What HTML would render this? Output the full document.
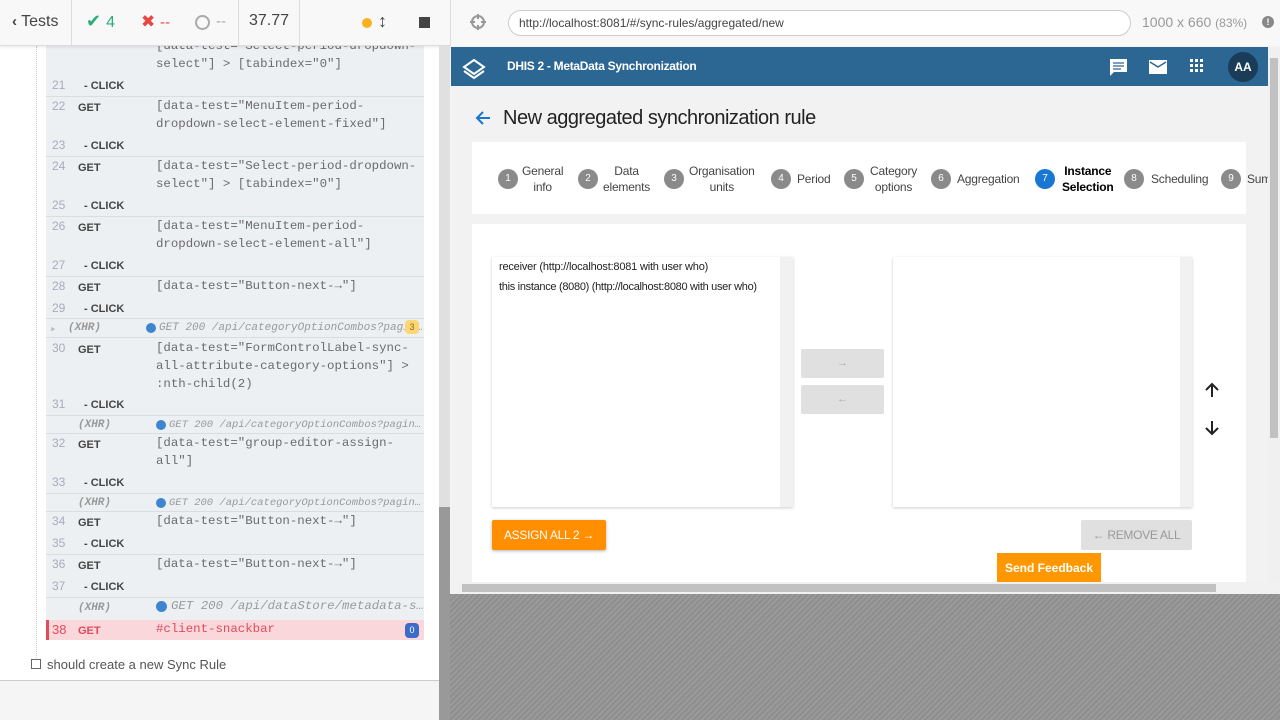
<!DOCTYPE html>
<html><head><meta charset="utf-8"><style>
*{box-sizing:border-box;margin:0;padding:0}
body{width:1280px;height:720px;overflow:hidden;position:relative;background:#f5f5f5;font-family:"Liberation Sans",sans-serif}
.a{position:absolute;white-space:nowrap}
.m{font-family:"Liberation Mono",monospace;font-size:12.4px;color:#6b6b6b}
.n{font-family:"Liberation Sans",sans-serif;font-size:12px;color:#aab}
.g{font-family:"Liberation Sans",sans-serif;font-size:11px;font-weight:bold;color:#444}
.x{font-family:"Liberation Mono",monospace;font-size:11px;font-style:italic;color:#999}
.hr{position:absolute;left:46px;width:378px;height:1px;background:#d8dde2}
.st{position:absolute;top:169px;width:20px;height:20px;border-radius:50%;background:#8a8a8a;color:#fff;font-size:10px;text-align:center;line-height:20px}
.sl{position:absolute;font-size:12px;color:#444;text-align:center;line-height:16px;letter-spacing:-0.2px}
</style></head><body>
<div class="a" style="left:0;top:0;width:439px;height:681px;background:#fff;border-bottom:1px solid #ccc"></div>
<div class="a" style="left:46px;top:46px;width:378px;height:594px;background:#edf0f3"></div>
<div class="a" style="left:36px;top:46px;width:0;height:612px;border-left:1px dotted #ccc"></div>
<div class="a" style="left:46px;top:620px;width:378px;height:20px;background:#f9d7db;border-left:3px solid #e04b5a"></div>
<div class="hr" style="top:96px"></div><div class="hr" style="top:156px"></div><div class="hr" style="top:216px"></div><div class="hr" style="top:276px"></div><div class="hr" style="top:318px"></div><div class="hr" style="top:337px"></div><div class="hr" style="top:415px"></div><div class="hr" style="top:433px"></div><div class="hr" style="top:493px"></div><div class="hr" style="top:511px"></div><div class="hr" style="top:554px"></div><div class="hr" style="top:597px"></div>
<div class="a m" style="left:156px;top:39px">[data-test="Select-period-dropdown-</div>
<div class="a m" style="left:156px;top:57px">select"] &gt; [tabindex="0"]</div>
<div class="a n" style="left:52px;top:78px">21</div><div class="a g" style="left:84px;top:80px">- CLICK</div>
<div class="a n" style="left:52px;top:99px">22</div><div class="a g" style="left:78px;top:102px">GET</div><div class="a m" style="left:156px;top:99px">[data-test="MenuItem-period-</div><div class="a m" style="left:156px;top:117px">dropdown-select-element-fixed"]</div>
<div class="a n" style="left:52px;top:138px">23</div><div class="a g" style="left:84px;top:140px">- CLICK</div>
<div class="a n" style="left:52px;top:159px">24</div><div class="a g" style="left:78px;top:162px">GET</div><div class="a m" style="left:156px;top:159px">[data-test="Select-period-dropdown-</div><div class="a m" style="left:156px;top:177px">select"] &gt; [tabindex="0"]</div>
<div class="a n" style="left:52px;top:198px">25</div><div class="a g" style="left:84px;top:200px">- CLICK</div>
<div class="a n" style="left:52px;top:219px">26</div><div class="a g" style="left:78px;top:222px">GET</div><div class="a m" style="left:156px;top:219px">[data-test="MenuItem-period-</div><div class="a m" style="left:156px;top:237px">dropdown-select-element-all"]</div>
<div class="a n" style="left:52px;top:258px">27</div><div class="a g" style="left:84px;top:260px">- CLICK</div>
<div class="a n" style="left:52px;top:279px">28</div><div class="a g" style="left:78px;top:282px">GET</div><div class="a m" style="left:156px;top:279px">[data-test="Button-next-→"]</div>
<div class="a n" style="left:52px;top:301px">29</div><div class="a g" style="left:84px;top:303px">- CLICK</div>
<div class="a x" style="left:50px;top:322px;color:#bbb">▸</div><div class="a x" style="left:68px;top:322px;font-weight:bold">(XHR)</div><div class="a" style="left:146px;top:323px;width:10px;height:10px;border-radius:50%;background:#3d86cf"></div><div class="a x" style="left:159px;top:322px">GET 200 /api/categoryOptionCombos?pagin…</div><div class="a" style="left:405px;top:320px;width:14px;height:14px;border-radius:4px;background:#fcd672;color:#8a6d1a;font-size:9px;text-align:center;line-height:14px">3</div>
<div class="a n" style="left:52px;top:341px">30</div><div class="a g" style="left:78px;top:344px">GET</div><div class="a m" style="left:156px;top:341px">[data-test="FormControlLabel-sync-</div><div class="a m" style="left:156px;top:359px">all-attribute-category-options"] &gt;</div><div class="a m" style="left:156px;top:377px">:nth-child(2)</div>
<div class="a n" style="left:52px;top:397px">31</div><div class="a g" style="left:84px;top:399px">- CLICK</div>
<div class="a x" style="left:78px;top:419px;font-weight:bold">(XHR)</div><div class="a" style="left:156px;top:420px;width:10px;height:10px;border-radius:50%;background:#3d86cf"></div><div class="a x" style="left:169px;top:419px;font-size:10.5px">GET 200 /api/categoryOptionCombos?pagin…</div>
<div class="a n" style="left:52px;top:436px">32</div><div class="a g" style="left:78px;top:439px">GET</div><div class="a m" style="left:156px;top:436px">[data-test="group-editor-assign-</div><div class="a m" style="left:156px;top:454px">all"]</div>
<div class="a n" style="left:52px;top:475px">33</div><div class="a g" style="left:84px;top:477px">- CLICK</div>
<div class="a x" style="left:78px;top:497px;font-weight:bold">(XHR)</div><div class="a" style="left:156px;top:498px;width:10px;height:10px;border-radius:50%;background:#3d86cf"></div><div class="a x" style="left:169px;top:497px;font-size:10.5px">GET 200 /api/categoryOptionCombos?pagin…</div>
<div class="a n" style="left:52px;top:514px">34</div><div class="a g" style="left:78px;top:517px">GET</div><div class="a m" style="left:156px;top:514px">[data-test="Button-next-→"]</div>
<div class="a n" style="left:52px;top:536px">35</div><div class="a g" style="left:84px;top:538px">- CLICK</div>
<div class="a n" style="left:52px;top:557px">36</div><div class="a g" style="left:78px;top:560px">GET</div><div class="a m" style="left:156px;top:557px">[data-test="Button-next-→"]</div>
<div class="a n" style="left:52px;top:579px">37</div><div class="a g" style="left:84px;top:581px">- CLICK</div>
<div class="a x" style="left:78px;top:602px;font-weight:bold">(XHR)</div><div class="a" style="left:156px;top:601px;width:11px;height:11px;border-radius:50%;background:#3d86cf"></div><div class="a x" style="left:171px;top:599px;font-size:12.4px">GET 200 /api/dataStore/metadata-s…</div>
<div class="a n" style="left:52px;top:622px;color:#e04b5a;font-size:13px">38</div><div class="a g" style="left:78px;top:625px;color:#e04b5a">GET</div><div class="a m" style="left:156px;top:622px;color:#e04b5a">#client-snackbar</div><div class="a" style="left:405px;top:623px;width:14px;height:15px;border-radius:4px;background:#3d6bc9;color:#fff;font-size:9px;text-align:center;line-height:15px">0</div>
<div class="a" style="left:31px;top:659px;width:10px;height:10px;border:1px solid #666"></div>
<div class="a" style="left:47px;top:657px;font-size:13px;color:#555">should create a new Sync Rule</div>
<div class="a" style="left:0;top:0;width:450px;height:46px;background:#f8f8f8;border-bottom:1px solid #ddd;box-shadow:0 1px 3px rgba(0,0,0,.1)"></div>
<div class="a" style="left:71px;top:0;width:1px;height:46px;background:#ddd"></div>
<div class="a" style="left:238px;top:0;width:1px;height:46px;background:#ddd"></div>
<div class="a" style="left:299px;top:0;width:1px;height:46px;background:#ddd"></div>
<div class="a" style="left:12px;top:13px;font-size:16px;color:#444"><b style="font-size:15px">‹</b> Tests</div>
<div class="a" style="left:86px;top:11px;font-size:18px;color:#2bad77">✔ <span style="font-size:16px">4</span></div>
<div class="a" style="left:141px;top:12px;font-size:17px;color:#e94444">✖ <span style="font-size:15px">--</span></div>
<div class="a" style="left:195px;top:15px;width:15px;height:15px;border:2px solid #aaa;border-radius:50%"></div><div class="a" style="left:216px;top:13px;font-size:15px;color:#aaa">--</div>
<div class="a" style="left:249px;top:12px;font-size:16px;color:#444">37.77</div>
<div class="a" style="left:362px;top:18px;width:10px;height:10px;border-radius:50%;background:#fbb11e"></div>
<div class="a" style="left:378px;top:11px;font-size:18px;color:#444;font-weight:bold">↕</div>
<div class="a" style="left:419px;top:17px;width:11px;height:11px;background:#444"></div>
<div class="a" style="left:439px;top:46px;width:11px;height:461px;background:#e0e0e0"></div>
<div class="a" style="left:439px;top:507px;width:11px;height:213px;background:#999"></div>
<div class="a" style="left:450px;top:0;width:830px;height:46px;background:#f8f8f8;border-left:1px solid #ddd"></div>
<svg class="a" style="left:469px;top:13px" width="18" height="18" viewBox="0 0 18 18"><circle cx="9" cy="9" r="6" fill="none" stroke="#999" stroke-width="2"/><path d="M9 1v5M9 12v5M1 9h5M12 9h5" stroke="#999" stroke-width="2"/></svg>
<div class="a" style="left:508px;top:10px;width:623px;height:26px;border:1px solid #ccc;border-radius:13px;background:#fff;font-size:12px;color:#444;padding:5px 10px">http://localhost:8081/#/sync-rules/aggregated/new</div>
<div class="a" style="left:1142px;top:14px;font-size:14px;color:#999">1000 x 660 <span style="font-size:12px">(83%)</span></div>
<div class="a" style="left:1262px;top:16px;width:12px;height:12px;border-radius:50%;background:#888;color:#fff;font-size:9px;text-align:center;line-height:12px;font-weight:bold">!</div>
<div class="a" style="left:450px;top:594px;width:830px;height:126px;background:repeating-linear-gradient(135deg,#8e8e8e 0 2px,#9a9a9a 2px 4px)"></div>
<div class="a" style="left:451px;top:47px;width:829px;height:547px;background:#f2f2f2"></div>
<div class="a" style="left:451px;top:47px;width:817px;height:39px;background:#2c6693"></div>
<svg class="a" style="left:462px;top:58px" width="24" height="22" viewBox="0 0 24 22"><path d="M12 2L22 9L12 16L2 9Z M2 13L12 20L22 13" fill="none" stroke="#fff" stroke-width="2"/></svg>
<div class="a" style="left:507px;top:59px;font-size:12px;color:#fff;font-weight:bold;letter-spacing:-0.3px">DHIS 2 - MetaData Synchronization</div>
<svg class="a" style="left:1109px;top:58px" width="19" height="19" viewBox="0 0 19 19"><path d="M1 1h17v13H5l-4 4z" fill="#fff"/><path d="M4 5h11M4 8h11M4 11h8" stroke="#2c6693" stroke-width="1.3"/></svg>
<svg class="a" style="left:1149px;top:60px" width="18" height="14" viewBox="0 0 18 14"><rect width="18" height="14" fill="#fff"/><path d="M1 2l8 5 8-5" fill="none" stroke="#2c6693" stroke-width="1.5"/></svg>
<svg class="a" style="left:1190px;top:59px" width="14" height="14"><g fill="#fff"><rect x="0" y="0" width="3" height="3"/><rect x="5" y="0" width="3" height="3"/><rect x="10" y="0" width="3" height="3"/><rect x="0" y="5" width="3" height="3"/><rect x="5" y="5" width="3" height="3"/><rect x="10" y="5" width="3" height="3"/><rect x="0" y="10" width="3" height="3"/><rect x="5" y="10" width="3" height="3"/><rect x="10" y="10" width="3" height="3"/></g></svg>
<div class="a" style="left:1228px;top:52px;width:30px;height:30px;border-radius:50%;background:#1b3c58;color:#fff;font-size:12px;font-weight:bold;text-align:center;line-height:30px">AA</div>
<div class="a" style="left:1268px;top:47px;width:12px;height:535px;background:#f0f0f0"></div>
<div class="a" style="left:1270px;top:58px;width:8px;height:380px;background:#c1c1c1"></div>
<svg class="a" style="left:475px;top:110px" width="16" height="16" viewBox="0 0 16 16"><path d="M15 8H2M8 2L2 8l6 6" fill="none" stroke="#1976d2" stroke-width="2"/></svg>
<div class="a" style="left:503px;top:107px;font-size:20px;color:#222;letter-spacing:-0.5px">New aggregated synchronization rule</div>
<div class="a" style="left:472px;top:142px;width:774px;height:72px;background:#fff"></div>
<div class="st" style="left:498px">1</div><div class="sl" style="left:522px;top:163px">General<br>info</div>
<div class="st" style="left:578px">2</div><div class="sl" style="left:603px;top:163px">Data<br>elements</div>
<div class="st" style="left:664px">3</div><div class="sl" style="left:689px;top:163px">Organisation<br>units</div>
<div class="st" style="left:771px">4</div><div class="sl" style="left:797px;top:171px">Period</div>
<div class="st" style="left:844px">5</div><div class="sl" style="left:870px;top:163px">Category<br>options</div>
<div class="st" style="left:931px">6</div><div class="sl" style="left:957px;top:171px">Aggregation</div>
<div class="st" style="left:1035px;background:#1976d2">7</div><div class="sl" style="left:1062px;top:163px;color:#000;font-weight:bold">Instance<br>Selection</div>
<div class="st" style="left:1124px">8</div><div class="sl" style="left:1151px;top:171px">Scheduling</div>
<div class="st" style="left:1221px">9</div><div class="sl" style="left:1247px;top:171px;width:21px;overflow:hidden;text-align:left">Sum</div>
<div class="a" style="left:472px;top:224px;width:774px;height:358px;background:#fff"></div>
<div class="a" style="left:492px;top:257px;width:301px;height:250px;background:#fff;box-shadow:0 1px 3px rgba(0,0,0,.2)"></div>
<div class="a" style="left:780px;top:257px;width:13px;height:250px;background:#f1f1f1"></div>
<div class="a" style="left:499px;top:261px;font-size:11px;color:#222;letter-spacing:-0.2px">receiver (http://localhost:8081 with user who)</div>
<div class="a" style="left:499px;top:281px;font-size:11px;color:#222;letter-spacing:-0.3px">this instance (8080) (http://localhost:8080 with user who)</div>
<div class="a" style="left:893px;top:257px;width:299px;height:250px;background:#fff;box-shadow:0 1px 3px rgba(0,0,0,.2)"></div>
<div class="a" style="left:1180px;top:257px;width:12px;height:250px;background:#f1f1f1"></div>
<div class="a" style="left:801px;top:349px;width:83px;height:29px;background:#e0e0e0;border-radius:2px;color:#aaa;font-size:11px;text-align:center;line-height:29px">→</div>
<div class="a" style="left:801px;top:385px;width:83px;height:29px;background:#e0e0e0;border-radius:2px;color:#aaa;font-size:11px;text-align:center;line-height:29px">←</div>
<svg class="a" style="left:1204px;top:382px" width="16" height="16" viewBox="0 0 16 16"><path d="M8 15V2M2 8l6-6 6 6" fill="none" stroke="#222" stroke-width="2"/></svg>
<svg class="a" style="left:1204px;top:420px" width="16" height="16" viewBox="0 0 16 16"><path d="M8 1v13M2 8l6 6 6-6" fill="none" stroke="#222" stroke-width="2"/></svg>
<div class="a" style="left:492px;top:520px;width:114px;height:30px;background:#ff8f00;border-radius:2px;color:#fff;font-size:12px;text-align:center;line-height:30px;box-shadow:0 1px 3px rgba(0,0,0,.3);letter-spacing:-0.3px">ASSIGN ALL 2 →</div>
<div class="a" style="left:1081px;top:520px;width:111px;height:30px;background:#e0e0e0;border-radius:2px;color:#999;font-size:12px;text-align:center;line-height:30px;letter-spacing:-0.3px">← REMOVE ALL</div>
<div class="a" style="left:997px;top:553px;width:104px;height:29px;background:#ff9800;color:#fff;font-size:12px;font-weight:bold;text-align:center;line-height:31px">Send Feedback</div>
<div class="a" style="left:451px;top:582px;width:829px;height:12px;background:#f1f1f1"></div>
<div class="a" style="left:462px;top:584px;width:754px;height:8px;background:#c1c1c1"></div>
</body></html>
